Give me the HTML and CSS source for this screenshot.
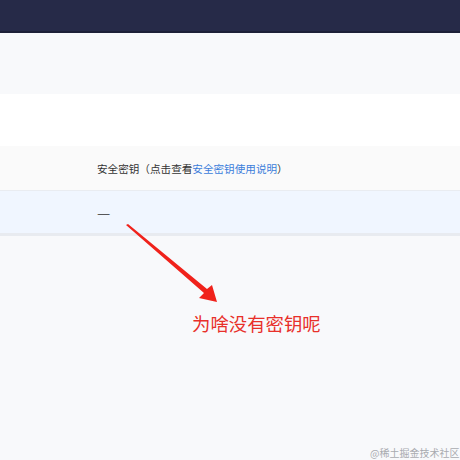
FILE: index.html
```html
<!DOCTYPE html>
<html lang="zh-CN">
<head>
  <meta charset="UTF-8">
  <meta name="viewport" content="width=device-width, initial-scale=1.0">
  <title>安全密钥</title>
  <link rel="stylesheet" href="styles.css">
</head>
<body>
  <div class="topbar"></div>
  <div class="band"></div>
  <div class="panel"></div>
  <table class="keys">
    <tr class="head">
      <th>安全密钥（点击查看<a href="#">安全密钥使用说明</a>）</th>
    </tr>
    <tr class="row">
      <td><span class="dash">—</span></td>
    </tr>
  </table>
  <div class="rest"></div>

  <svg class="arrow" width="460" height="460" viewBox="0 0 460 460">
    <polygon points="126,225 128,224 207,289 212,285 217,302 199,298 204,293" fill="#f0221b"/>
  </svg>
  <div class="note">为啥没有密钥呢</div>
  <div class="mark">@稀土掘金技术社区</div>
</body>
</html>
```

FILE: styles.css
```css
body {
  margin: 0;
  padding: 0;
  background: #f8f9fb;
  font-family: "Microsoft YaHei", "Noto Sans CJK SC", sans-serif;
  overflow: hidden;
}
.topbar {
  height: 31px;
  background: #262a48;
  border-bottom: 2px solid #1d2038;
}
.band {
  height: 61px;
  background: #f8f9fb;
}
.panel {
  height: 52px;
  background: #fff;
}
.keys {
  width: 100%;
  border-collapse: collapse;
  font-size: 10.6px;
  color: #333;
}
.keys th, .keys td {
  text-align: left;
  font-weight: normal;
  padding: 0 0 0 97px;
}
.head th {
  height: 44px;
  background: #fafafa;
  border-bottom: 1px solid #e9ecf1;
}
.head a {
  color: #3b7ddb;
  text-decoration: none;
}
.row td {
  height: 42px;
  background: #f0f6ff;
  border-bottom: 3px solid #e8ebf0;
}
.dash {
  display: inline-block;
  transform: scaleX(1.4);
  transform-origin: left center;
}
.rest {
  height: 230px;
}
.arrow {
  position: absolute;
  left: 0;
  top: 0;
}
.note {
  position: absolute;
  left: 192px;
  top: 310px;
  font-size: 18.4px;
  color: #e8302a;
}
.mark {
  position: absolute;
  left: 370px;
  top: 445px;
  font-size: 10px;
  color: #a9abb0;
}
```
